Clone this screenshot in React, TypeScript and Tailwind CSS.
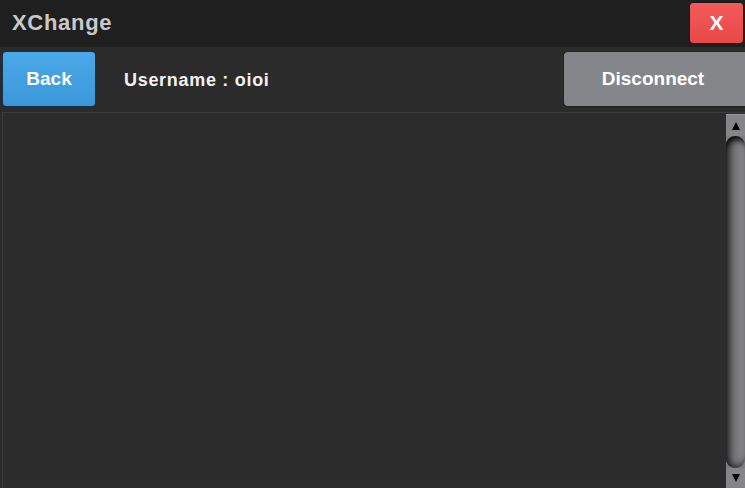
import React from "react";

function ScrollBar() {
  return (
    <div className="flex w-[19px] flex-col border-t border-[#9a9a9c] bg-[#7e7e80]">
      <div className="flex h-[21px] items-center justify-center bg-[#858587] pt-[1px]">
        <svg width="10" height="10" viewBox="0 0 10 10">
          <polygon points="5,1 9,9 1,9" fill="#050505" />
        </svg>
      </div>
      <div className="flex-1 bg-[#7e7e80]">
        <div className="h-full rounded-t-[9px] rounded-b-[9px] bg-gradient-to-r from-[#404042] via-[#767678] to-[#8a8a8c] shadow-[inset_2px_7px_6px_-3px_rgba(0,0,0,0.95),inset_0_-6px_6px_-3px_rgba(0,0,0,0.55)]" />
      </div>
      <div className="flex h-[20px] items-center justify-center bg-[#858587]">
        <svg width="10" height="10" viewBox="0 0 10 10">
          <polygon points="1,1 9,1 5,9" fill="#050505" />
        </svg>
      </div>
    </div>
  );
}

export default function App() {
  return (
    <div
      className="flex h-[488px] w-[745px] flex-col overflow-hidden bg-[#2b2b2b]"
      style={{ fontFamily: '"Liberation Sans", Arial, sans-serif' }}
    >
      <header className="flex h-[47px] items-start justify-between bg-[#1f1f1f]">
        <h1 className="mt-[10px] ml-[12px] text-[22px] font-bold leading-[26px] tracking-[0.7px] text-[#c9c9c9]">
          XChange
        </h1>
        <button className="mt-[2px] mr-[1px] flex h-[42px] w-[55px] items-center justify-center rounded-[4px] border border-[#1a1a1a] bg-gradient-to-b from-[#f45a5a] to-[#e84848] text-[21px] font-bold text-white">
          X
        </button>
      </header>

      <div className="flex h-[65px] items-start justify-between pt-[4px]">
        <div className="flex items-center">
          <button className="ml-[2px] flex h-[56px] w-[94px] items-center justify-center rounded-[4px] border border-[#16324a] bg-gradient-to-b from-[#4aa9ea] to-[#3b97d8] text-[19px] font-bold text-white">
            Back
          </button>
          <span className="ml-[28px] mt-[2px] text-[18px] font-bold tracking-[0.7px] text-[#f2f2f2]">
            Username : oioi
          </span>
        </div>
        <button className="flex h-[56px] w-[182px] items-center justify-center rounded-l-[5px] border border-r-0 border-[#222] bg-[#858689] pr-[3px] text-[19px] font-bold text-white">
          Disconnect
        </button>
      </div>

      <main className="ml-[2px] flex flex-1 border-t border-l border-[#3c3c3c] bg-[#2c2c2c] pt-[1px]">
        <div className="flex-1" />
        <ScrollBar />
      </main>
    </div>
  );
}
